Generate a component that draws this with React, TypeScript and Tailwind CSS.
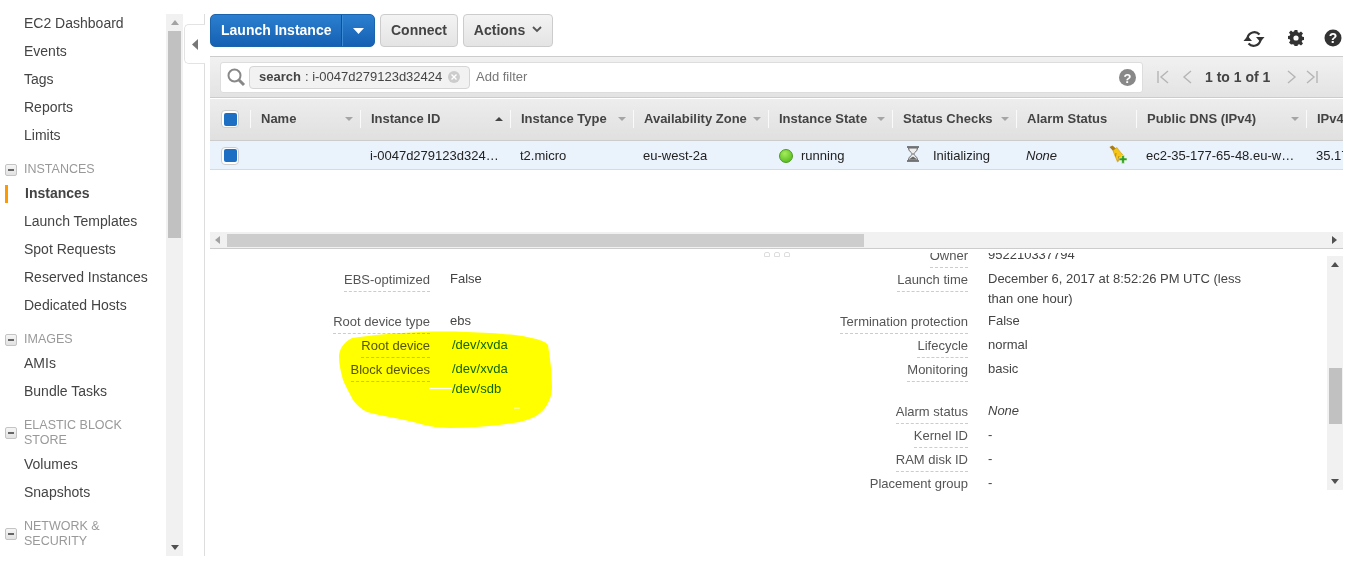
import React from 'react';

const navTop = ['EC2 Dashboard', 'Events', 'Tags', 'Reports', 'Limits'];

const NavItem = ({ label }: { label: string }) => (
  <div className="h-7 pl-6 leading-7 text-[#444]">{label}</div>
);

const NavGroup = ({ label, className }: { label: React.ReactNode; className: string }) => (
  <div className={`flex items-center pl-[5px] text-[12.5px] text-[#999] leading-[15px] ${className}`}>
    <span className="mr-[7px] flex h-[12px] w-[12px] shrink-0 items-center justify-center rounded-[2px] border border-[#c4c4c4] bg-gradient-to-b from-[#f5f5f5] to-[#e2e2e2]">
      <span className="h-[2px] w-[6px] bg-[#666]" />
    </span>
    <span>{label}</span>
  </div>
);

const SortArrow = ({ up }: { up?: boolean }) => (
  <svg width="8" height="4" viewBox="0 0 8 4" className={up ? 'fill-[#444]' : 'fill-[#a5a5a5]'}>
    <path d={up ? 'M0 4 L4 0 L8 4 Z' : 'M0 0 L8 0 L4 4 Z'} />
  </svg>
);

const columns = [
  { title: 'Name', width: 'w-[110px]', arrow: 'down' },
  { title: 'Instance ID', width: 'w-[150px]', arrow: 'up' },
  { title: 'Instance Type', width: 'w-[123px]', arrow: 'down' },
  { title: 'Availability Zone', width: 'w-[135px]', arrow: 'down' },
  { title: 'Instance State', width: 'w-[124px]', arrow: 'down' },
  { title: 'Status Checks', width: 'w-[124px]', arrow: 'down' },
  { title: 'Alarm Status', width: 'w-[120px]', arrow: '' },
  { title: 'Public DNS (IPv4)', width: 'w-[170px]', arrow: 'down' },
  { title: 'IPv4 Public IP', width: 'w-[120px]', arrow: '' },
];

const Checkbox = () => (
  <span className="flex h-[18px] w-[18px] items-center justify-center rounded-[4px] border border-[#ccc] bg-white">
    <span className="h-[13px] w-[13px] rounded-[2px] bg-[#1d6fc4]" />
  </span>
);

const PagerIcon = ({ d }: { d: string }) => (
  <svg width="13" height="14" viewBox="0 0 13 14" fill="none" stroke="#b5b5b5" strokeWidth="1.4">
    <path d={d} />
  </svg>
);

const DetailRow = ({ label, children, className = 'h-6' }: { label: string; children: React.ReactNode; className?: string }) => (
  <div className={`flex ${className}`}>
    <div className="w-[220px] shrink-0 text-right">
      <span className="inline-block border-b border-dashed border-[#ccc] pt-px pb-px leading-5 text-[#555]">{label}</span>
    </div>
    <div className="ml-5 w-[265px] leading-5 text-[#444]">{children}</div>
  </div>
);

const Link = ({ children }: { children: React.ReactNode }) => (
  <div className="pl-[2px] text-[#1166bb]">{children}</div>
);

export default function App() {
  return (
    <div className="relative flex h-[561px] w-[1354px] overflow-hidden bg-white pt-[14px] text-[14px] font-['Liberation_Sans',Arial,sans-serif]">
      {/* sidebar */}
      <div className="flex h-[542px] w-[166px] shrink-0 flex-col overflow-hidden">
        <div className="-mt-[5px]">
          {navTop.map((n) => (
            <NavItem key={n} label={n} />
          ))}
        </div>
        <NavGroup label="INSTANCES" className="mt-[13px] h-[15px]" />
        <div className="relative mt-[2px]">
          <span className="absolute left-[5px] top-[6px] h-[18px] w-[3px] bg-[#f90]" />
          <div className="h-7 pl-[25px] font-bold leading-7 text-[#444]">Instances</div>
        </div>
        <NavItem label="Launch Templates" />
        <NavItem label="Spot Requests" />
        <NavItem label="Reserved Instances" />
        <NavItem label="Dedicated Hosts" />
        <NavGroup label="IMAGES" className="mt-[13px] h-[15px]" />
        <div className="mt-[2px]">
          <NavItem label="AMIs" />
          <NavItem label="Bundle Tasks" />
        </div>
        <NavGroup label={<>ELASTIC BLOCK<br />STORE</>} className="mt-[13px] h-[30px]" />
        <div className="mt-[2px]">
          <NavItem label="Volumes" />
          <NavItem label="Snapshots" />
        </div>
        <NavGroup label={<>NETWORK &amp;<br />SECURITY</>} className="mt-[13px] h-[30px]" />
      </div>

      {/* sidebar scrollbar */}
      <div className="flex h-[542px] w-[17px] shrink-0 flex-col items-center bg-[#f1f1f1]">
        <div className="flex h-[17px] items-center">
          <svg width="8" height="5" viewBox="0 0 8 5" className="fill-[#a3a3a3]"><path d="M0 5 L4 0 L8 5 Z" /></svg>
        </div>
        <div className="h-[207px] w-[13px] bg-[#c1c1c1]" />
        <div className="flex-1" />
        <div className="flex h-[17px] items-center">
          <svg width="8" height="5" viewBox="0 0 8 5" className="fill-[#505050]"><path d="M0 0 L8 0 L4 5 Z" /></svg>
        </div>
      </div>

      {/* collapse tab */}
      <div className="h-[542px] w-[22px] shrink-0 border-r border-[#ddd] pt-[10px] pl-[1px]">
        <div className="-mr-px flex h-[40px] items-center rounded-l-[5px] border border-r-0 border-[#e3e3e3] bg-white pl-[7px]">
          <svg width="6" height="11" viewBox="0 0 6 11" className="fill-[#777]"><path d="M6 0 L6 11 L0 5.5 Z" /></svg>
        </div>
      </div>

      {/* main */}
      <div className="ml-[5px] flex h-[542px] w-[1133px] shrink-0 flex-col">
        <div className="flex h-[33px] items-start">
          <div className="flex h-[33px] w-[165px] rounded-[5px] border border-[#1a64ad] bg-gradient-to-b from-[#2b7fd0] to-[#1560b2] font-bold text-white">
            <div className="flex h-full flex-1 items-center border-r border-[#10518f] pl-[10px]">Launch Instance</div>
            <div className="flex h-full w-[32px] items-center justify-center border-l border-[#3b8ad6]">
              <svg width="11" height="6" viewBox="0 0 11 6" className="fill-white"><path d="M0 0 L11 0 L5.5 6 Z" /></svg>
            </div>
          </div>
          <div className="ml-[5px] flex h-[33px] w-[78px] items-center justify-center rounded-[4px] border border-[#ccc] bg-gradient-to-b from-[#f3f3f3] to-[#e4e4e4] font-bold text-[#444]">Connect</div>
          <div className="ml-[5px] flex h-[33px] w-[90px] items-center justify-center gap-[7px] rounded-[4px] border border-[#ccc] bg-gradient-to-b from-[#f3f3f3] to-[#e4e4e4] font-bold text-[#444]">
            Actions
            <svg width="10" height="7" viewBox="0 0 10 7" fill="none" stroke="#555" strokeWidth="1.8" className="-mt-[2px]"><path d="M1 1 L5 5 L9 1" /></svg>
          </div>
          <div className="ml-auto mt-[15px] flex items-start">
            <svg width="22" height="20" viewBox="0 0 22 20" fill="none" stroke="#333" strokeWidth="2.2">
              <path d="M4.5 9 A7 7 0 0 1 16.5 5.5" />
              <path d="M17.5 11 A7 7 0 0 1 5.5 14.5" />
              <path d="M13 8 L21.5 8 L17.3 13 Z" fill="#333" stroke="none" />
              <path d="M0.5 12 L9 12 L4.7 7 Z" fill="#333" stroke="none" />
            </svg>
            <svg width="16" height="16" viewBox="0 0 16 16" className="ml-[23px] mt-px fill-[#333]">
              <path fillRule="evenodd" d="M6.6 0h2.8l.4 2.2 1.4.6L13 1.5l2 2-1.3 1.8.6 1.4 2.2.4v2.8l-2.2.4-.6 1.4 1.3 1.8-2 2-1.8-1.3-1.4.6-.4 2.2H6.6l-.4-2.2-1.4-.6L3 14.5l-2-2 1.3-1.8-.6-1.4L-.5 9V6.2l2.2-.4.6-1.4L1 2.6l2-2 1.8 1.3 1.4-.6zM8 5.4a2.6 2.6 0 1 0 0 5.2 2.6 2.6 0 0 0 0-5.2z" />
            </svg>
            <svg width="18" height="18" viewBox="0 0 18 18" className="ml-[20px] mr-px">
              <circle cx="9" cy="9" r="8.5" fill="#333" />
              <text x="9" y="14" textAnchor="middle" fontSize="14" fontWeight="bold" fill="#fff" fontFamily="Liberation Sans">?</text>
            </svg>
          </div>
        </div>

        {/* filter bar */}
        <div className="mt-[9px] flex h-[42px] items-center border-t border-b border-[#ccc] bg-gradient-to-b from-[#f1f1f1] to-[#e3e3e3] pl-[10px]">
          <div className="flex h-[31px] w-[923px] items-center rounded-[3px] border border-[#ddd] bg-white text-[13px]">
            <svg width="20" height="20" viewBox="0 0 20 20" fill="none" stroke="#888" className="ml-[5px]">
              <circle cx="8.5" cy="8.5" r="6" strokeWidth="2" />
              <path d="M13 13 L18 18" strokeWidth="3" />
            </svg>
            <div className="ml-[3px] flex h-[23px] w-[221px] items-center whitespace-nowrap rounded-[4px] border border-[#d5d5d5] bg-[#f2f2f2] pl-[9px] text-[#444]">
              <span className="font-bold">search</span>
              <span className="ml-1">: i-0047d279123d32424</span>
              <span className="ml-[6px] flex h-[12px] w-[12px] items-center justify-center rounded-full bg-[#ccc]">
                <svg width="6" height="6" viewBox="0 0 6 6" stroke="#fff" strokeWidth="1.4"><path d="M0.5 0.5 L5.5 5.5 M5.5 0.5 L0.5 5.5" /></svg>
              </span>
            </div>
            <span className="ml-[6px] text-[#777]">Add filter</span>
            <svg width="17" height="17" viewBox="0 0 17 17" className="ml-auto mr-[6px]">
              <circle cx="8.5" cy="8.5" r="8.5" fill="#888" />
              <text x="8.5" y="13.5" textAnchor="middle" fontSize="13" fontWeight="bold" fill="#fff" fontFamily="Liberation Sans">?</text>
            </svg>
          </div>
          <div className="ml-[14px] flex items-center">
            <PagerIcon d="M1 1 V13 M11 1 L4 7 L11 13" />
            <span className="ml-[12px]"><PagerIcon d="M9 1 L2 7 L9 13" /></span>
            <span className="ml-[10px] font-bold text-[#444]">1 to 1 of 1</span>
            <span className="ml-[14px]"><PagerIcon d="M4 1 L11 7 L4 13" /></span>
            <span className="ml-[8px]"><PagerIcon d="M2 1 L9 7 L2 13 M12 1 V13" /></span>
          </div>
        </div>

        {/* table header */}
        <div className="mt-px flex h-[42px] overflow-hidden border-b border-[#ccc] bg-gradient-to-b from-[#ededed] to-[#e0e0e0] pb-px text-[13px]">
          <div className="flex w-[40px] shrink-0 items-center pl-[11px]"><Checkbox /></div>
          {columns.map((c) => (
            <div key={c.title} className={`relative flex shrink-0 items-center justify-between pl-[11px] pr-[7px] ${c.width}`}>
              <span className="absolute left-0 top-[11px] h-[18px] w-px bg-[#fafafa]" />
              <span className="whitespace-nowrap font-bold text-[#444]">{c.title}</span>
              {c.arrow && <SortArrow up={c.arrow === 'up'} />}
            </div>
          ))}
        </div>

        {/* selected row */}
        <div className="flex h-[29px] items-center overflow-hidden border-b border-[#d5dbe3] bg-[#eaf2fc] pt-px text-[13px] text-[#222]">
          <div className="flex w-[150px] shrink-0 pl-[11px]"><Checkbox /></div>
          <div className="w-[150px] shrink-0 truncate pl-[10px] pr-[11px]">i-0047d279123d32424</div>
          <div className="w-[123px] shrink-0 pl-[10px]">t2.micro</div>
          <div className="w-[135px] shrink-0 pl-[10px]">eu-west-2a</div>
          <div className="flex w-[124px] shrink-0 items-center pl-[11px]">
            <span className="h-[14px] w-[14px] rounded-full border border-[#4a9a1c] bg-[radial-gradient(circle_at_40%_30%,#a6ec5c,#45b312)]" />
            <span className="ml-[8px]">running</span>
          </div>
          <div className="flex w-[124px] shrink-0 items-center pl-[14px]">
            <svg width="14" height="16" viewBox="0 0 14 16" className="-mt-[4px]">
              <path d="M1 1 H13 M1 15 H13" stroke="#555" strokeWidth="1.6" />
              <path d="M2.5 2 H11.5 C11.5 5.5 8 6.5 7.6 8 C8 9.5 11.5 10.5 11.5 14 H2.5 C2.5 10.5 6 9.5 6.4 8 C6 6.5 2.5 5.5 2.5 2 Z" fill="#eee" stroke="#666" />
              <path d="M3.5 13.5 C4.5 11.5 6.5 11 7 10.5 C7.5 11 9.5 11.5 10.5 13.5 Z" fill="#666" />
            </svg>
            <span className="ml-[13px]">Initializing</span>
          </div>
          <div className="flex w-[120px] shrink-0 items-center pl-[10px]">
            <span className="w-[83px] italic">None</span>
            <svg width="19" height="19" viewBox="0 0 19 19" className="-mt-[2px]">
              <path d="M0.5 2 L3.5 0.5 L7.5 4 L5 7 Z" fill="#a87c10" />
              <path d="M4 5.5 L8 2.5 C10 6 13 9 15 11 L8.5 17 C7 13 5 9 4 5.5 Z" fill="#f5c518" stroke="#c99a12" strokeWidth="0.6" />
              <path d="M9 16 L10 11 M6.5 11.5 L7 8" stroke="#a87c10" strokeWidth="0.8" />
              <path d="M12.7 10.5 H15.3 V13 H18 V15.6 H15.3 V18.4 H12.7 V15.6 H10 V13 H12.7 Z" fill="#2f9e1f" stroke="#e8f7e4" strokeWidth="0.6" />
            </svg>
          </div>
          <div className="w-[170px] shrink-0 truncate pl-[10px] pr-[7px]">ec2-35-177-65-48.eu-west-2.compute.amazonaws.com</div>
          <div className="w-[120px] shrink-0 pl-[10px]">35.177.65.48</div>
        </div>

        {/* horizontal scrollbar */}
        <div className="mt-[62px] flex h-[17px] items-center border-b border-[#ccc] bg-[#f1f1f1]">
          <svg width="5" height="8" viewBox="0 0 5 8" className="ml-[5px] fill-[#a3a3a3]"><path d="M5 0 L5 8 L0 4 Z" /></svg>
          <div className="ml-[7px] h-[13px] w-[637px] bg-[#cdcdcd]" />
          <svg width="5" height="8" viewBox="0 0 5 8" className="ml-auto mr-[6px] fill-[#505050]"><path d="M0 0 L0 8 L5 4 Z" /></svg>
        </div>

        {/* details */}
        <div className="relative flex h-[242px] items-start text-[13px]">
          <div className="absolute left-[554px] top-[3px] flex gap-[4px]">
            <span className="h-[5px] w-[6px] rounded-t-[2px] border border-[#ddd]" />
            <span className="h-[5px] w-[6px] rounded-t-[2px] border border-[#ddd]" />
            <span className="h-[5px] w-[6px] rounded-t-[2px] border border-[#ddd]" />
          </div>
          <div className="mt-[4px] h-[238px] w-[1117px] overflow-hidden">
            <div className="flex">
              <div className="w-[538px] shrink-0 pt-[16px]">
                <DetailRow label="EBS-optimized" className="h-[42px]">False</DetailRow>
                <DetailRow label="Root device type">ebs</DetailRow>
                <DetailRow label="Root device"><Link>/dev/xvda</Link></DetailRow>
                <DetailRow label="Block devices" className="h-[40px]">
                  <Link>/dev/xvda</Link>
                  <Link>/dev/sdb</Link>
                </DetailRow>
              </div>
              <div className="-mt-[8px] w-[520px] shrink-0">
                <DetailRow label="Owner">952210337794</DetailRow>
                <DetailRow label="Launch time" className="h-[42px]">December 6, 2017 at 8:52:26 PM UTC (less than one hour)</DetailRow>
                <DetailRow label="Termination protection">False</DetailRow>
                <DetailRow label="Lifecycle">normal</DetailRow>
                <DetailRow label="Monitoring">basic</DetailRow>
                <div className="h-[18px]" />
                <DetailRow label="Alarm status"><span className="italic">None</span></DetailRow>
                <DetailRow label="Kernel ID">-</DetailRow>
                <DetailRow label="RAM disk ID">-</DetailRow>
                <DetailRow label="Placement group">-</DetailRow>
              </div>
            </div>
          </div>
          <div className="mt-[7px] flex h-[234px] w-[16px] shrink-0 flex-col items-center bg-[#f1f1f1]">
            <div className="flex h-[17px] items-center">
              <svg width="8" height="5" viewBox="0 0 8 5" className="fill-[#505050]"><path d="M0 5 L4 0 L8 5 Z" /></svg>
            </div>
            <div className="mt-[95px] h-[56px] w-[13px] bg-[#c1c1c1]" />
            <div className="flex-1" />
            <div className="flex h-[17px] items-center">
              <svg width="8" height="5" viewBox="0 0 8 5" className="fill-[#505050]"><path d="M0 0 L8 0 L4 5 Z" /></svg>
            </div>
          </div>
        </div>
      </div>

      {/* yellow marker scribble */}
      <svg width="230" height="110" viewBox="330 325 230 110" className="absolute left-[330px] top-[325px] mix-blend-multiply">
        <path
          d="M339 357 C339 349 344 342 352 338 C372 335 395 333 420 332 C445 331 470 332 490 333 C505 334 518 335 527 337 C537 339 545 341 548 345 C550 358 552 372 552 387 C552 392 551 397 549 401 C546 407 543 411 539 414 C532 419 522 422 513 423 C492 426 470 428 450 428 C436 428 424 425 413 422 C397 418 381 416 367 412 C361 409 356 404 353 400 C350 394 346 387 343 380 C341 372 339 365 339 357 Z"
          fill="#ffff00"
        />
        <path d="M429 388.5 H452" stroke="#fff" strokeWidth="1.2" />
        <path d="M514 408 H520" stroke="#fff" strokeWidth="1" />
      </svg>
    </div>
  );
}
